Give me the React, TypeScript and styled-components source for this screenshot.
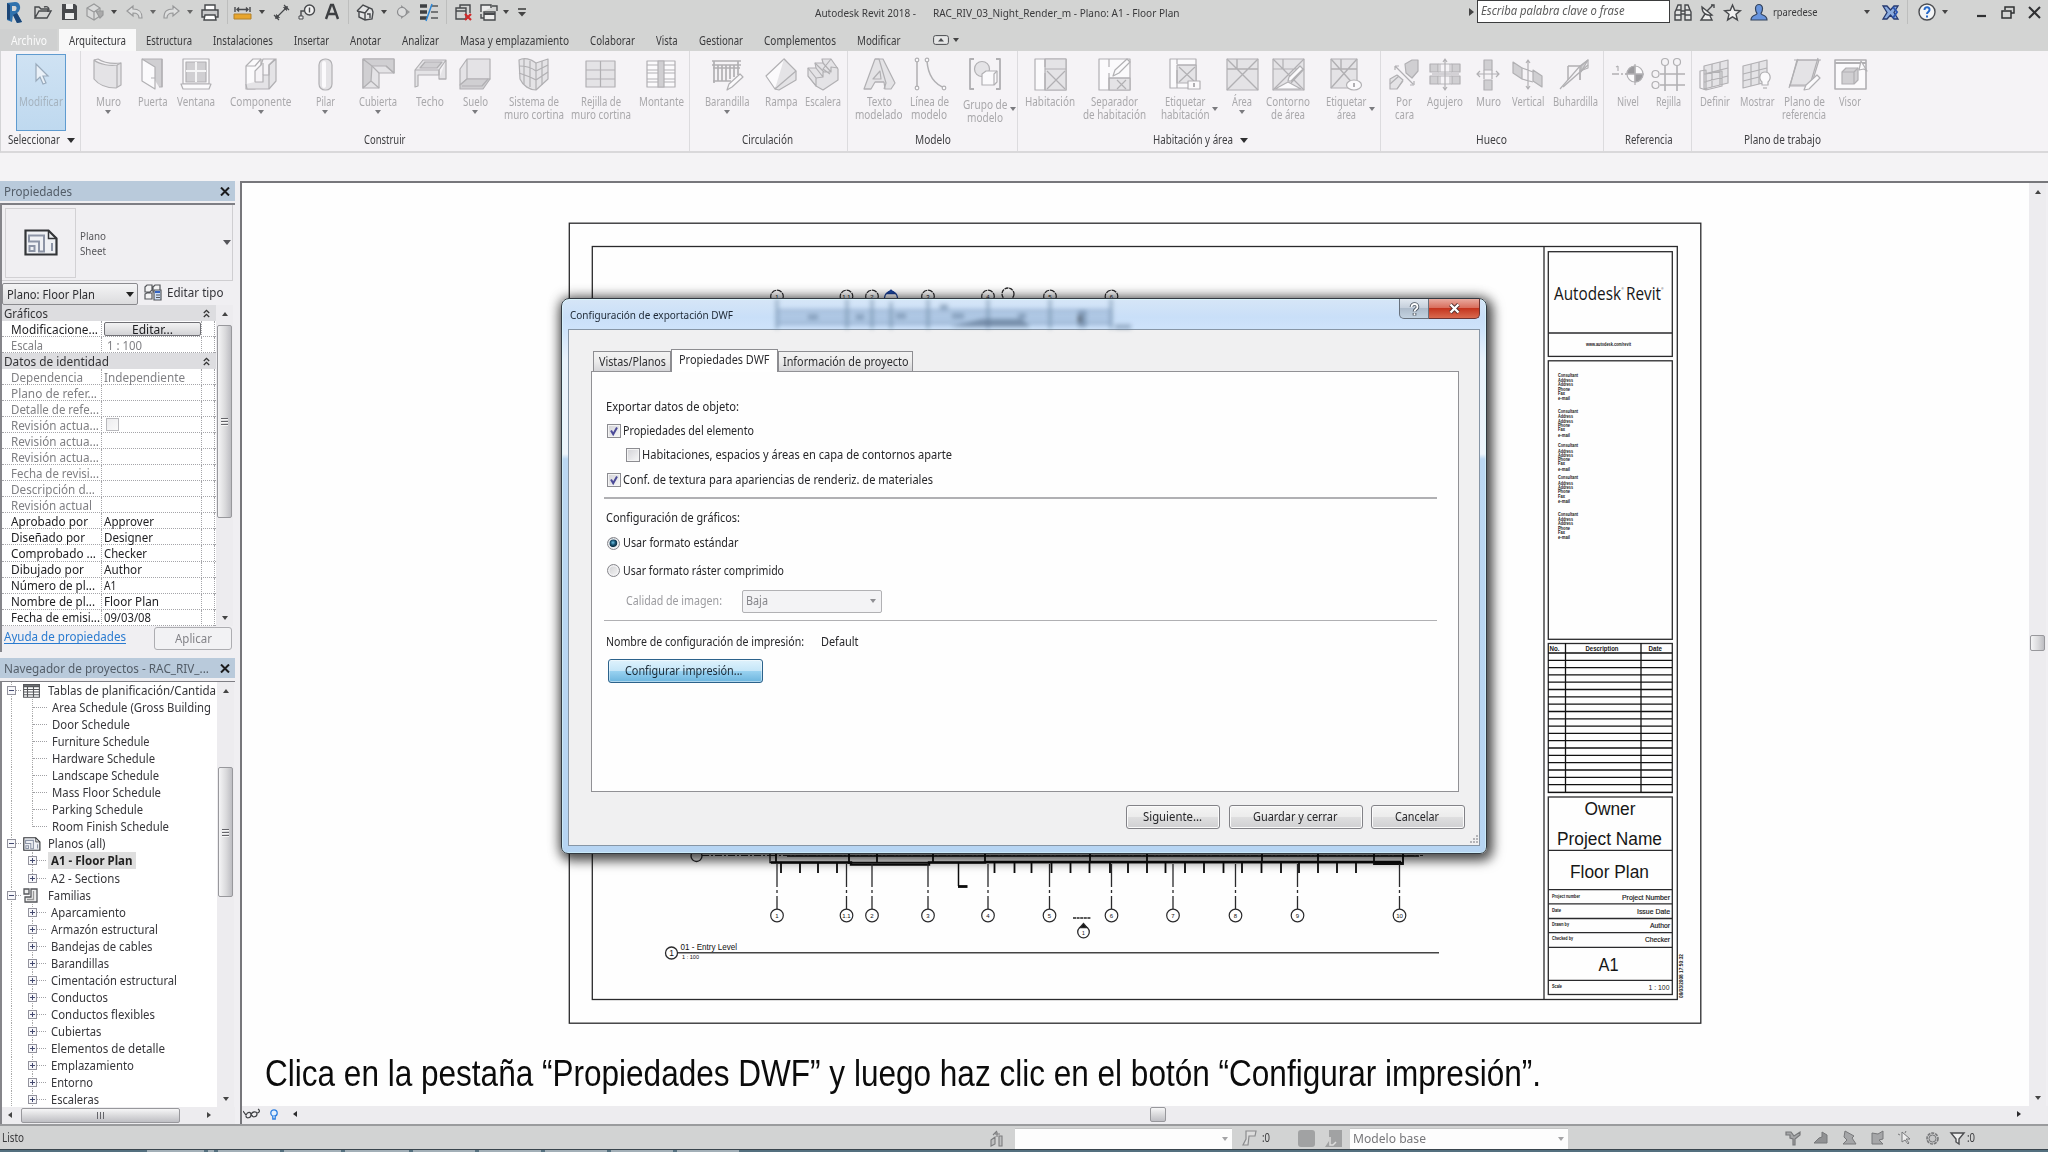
import React, { useLayoutEffect, useRef } from 'react';
import styled, { createGlobalStyle, css } from 'styled-components';

const UI = `"Noto Sans", "Open Sans", "DejaVu Sans", sans-serif`;
const ARIAL = `"Liberation Sans", Arial, sans-serif`;

const Global = createGlobalStyle`
  *, *::before, *::after { box-sizing: border-box; }
  html, body { margin: 0; padding: 0; }
  body { width: 2048px; height: 1152px; overflow: hidden; background: #f4f3f5; font-family: ${UI}; font-size: 12px; color: #2c2c2e; }
`;

/* ---------- condensed text ---------- */
const FitBox = styled.span<{ $w: number }>`
  display: inline-block;
  flex: none;
  width: ${p => p.$w}px;
  white-space: nowrap;
  text-align: left;
`;
const FitInner = styled.span`
  display: inline-block;
  transform-origin: 0 50%;
`;
function Fit({ w, children }: { w: number; children: React.ReactNode }) {
  const ref = useRef<HTMLSpanElement>(null);
  useLayoutEffect(() => {
    const el = ref.current;
    if (!el) return;
    el.style.transform = 'none';
    el.style.transform = `scaleX(${w / el.getBoundingClientRect().width})`;
  }, [w, children]);
  return <FitBox $w={w}><FitInner ref={ref}>{children}</FitInner></FitBox>;
}

const Tri = styled.i<{ $d?: 'up' | 'down' | 'left' | 'right'; $s?: number; $c?: string }>`
  display: block;
  flex: none;
  width: 0;
  height: 0;
  ${p => {
    const s = p.$s ?? 3;
    const c = p.$c ?? '#444';
    const d = p.$d ?? 'down';
    if (d === 'down') return css`border: ${s}px solid transparent; border-bottom: 0; border-top: ${s + 1}px solid ${c};`;
    if (d === 'up') return css`border: ${s}px solid transparent; border-top: 0; border-bottom: ${s + 1}px solid ${c};`;
    if (d === 'left') return css`border: ${s}px solid transparent; border-left: 0; border-right: ${s + 1}px solid ${c};`;
    return css`border: ${s}px solid transparent; border-right: 0; border-left: ${s + 1}px solid ${c};`;
  }}
`;

/* ---------- page frame ---------- */
const Page = styled.div`
  position: relative;
  width: 2048px;
  height: 1152px;
  overflow: hidden;
  display: flex;
  flex-direction: column;
  background: #f4f3f5;
`;
const TitleBar = styled.header`
  height: 29px;
  flex: none;
  display: flex;
  align-items: flex-start;
  background: #d3d4d3;
`;
const Slot = styled.div<{ $gap: number; $w: number; $h?: number }>`
  flex: none;
  margin-left: ${p => p.$gap}px;
  width: ${p => p.$w}px;
  height: ${p => p.$h ?? 24}px;
  display: flex;
  align-items: center;
  justify-content: center;
  svg { display: block; flex: none; overflow: visible; }
`;
const VSep = styled.div<{ $gap: number }>`
  flex: none;
  width: 1px;
  height: 24px;
  margin-left: ${p => p.$gap}px;
  background: #bdbebd;
`;
const AppTitle = styled.div<{ $gap: number; $w: number }>`
  margin-left: ${p => p.$gap}px;
  width: ${p => p.$w}px;
  line-height: 26px;
  font-size: 11.5px;
  color: #3a3a3c;
`;
const SearchInput = styled.div`
  margin-left: 3px;
  width: 193px;
  height: 23px;
  border: 1.5px solid #3b3c3d;
  background: #fff;
  padding-left: 3px;
  line-height: 20px;
  font-style: italic;
  font-size: 12px;
  color: #5c5c5c;
`;
const UserName = styled.div`
  margin-left: 5px;
  width: 45px;
  line-height: 24px;
  font-size: 11.5px;
  color: #3a3a3c;
`;
const Tabs = styled.nav`
  height: 22px;
  flex: none;
  display: flex;
  background: #d3d4d3;
`;
const Tab = styled.div<{ $on?: boolean; $file?: boolean }>`
  height: 22px;
  line-height: 23px;
  padding: 0 ${p => (p.$on ? 10 : 10.5)}px;
  margin-right: ${p => (p.$file ? 1.5 : 0)}px;
  font-size: 12px;
  color: ${p => (p.$file ? '#fbfbfb' : '#3a3a3c')};
  background: ${p => (p.$on ? '#f8f8f8' : p.$file ? '#cfd0d0' : 'transparent')};
`;
const TabExtra = styled.div`
  display: flex;
  align-items: center;
  gap: 4px;
  margin-left: 22px;
`;
const Ribbon = styled.section`
  height: 102px;
  flex: none;
  display: flex;
  background: #f5f3f6;
  border-bottom: 2px solid #d9d8da;
  border-left: 1px solid #d4d4d6;
`;
const RPanel = styled.div<{ $w: number; $last?: boolean }>`
  width: ${p => p.$w}px;
  flex: none;
  display: flex;
  flex-direction: column;
  border-right: ${p => (p.$last ? 0 : 1)}px solid #dcdbde;
`;
const RTools = styled.div`
  height: 79px;
  display: flex;
  align-items: flex-start;
`;
const RTitle = styled.div<{ $pad: number }>`
  padding-left: ${p => p.$pad}px;
  line-height: 20px;
  font-size: 12px;
  display: flex;
  align-items: center;
  gap: 7px;
  color: #3f3f42;
`;
const Tool = styled.div<{ $gap: number; $w: number; $drop?: boolean }>`
  position: relative;
  flex: none;
  margin-left: ${p => p.$gap}px;
  width: ${p => p.$w}px;
  padding-top: 6px;
  display: flex;
  flex-direction: column;
  align-items: center;
  color: #a9a8ab;
  font-size: 12px;
  line-height: 13px;
  svg { display: block; flex: none; margin-bottom: ${p => (p.$drop ? 7 : 4)}px; overflow: visible; }
`;
const UnderArrow = styled.div`
  margin-top: 2px;
`;
const SideArrow = styled.div`
  position: absolute;
  right: -8px;
  top: 56px;
`;
const SelectedTool = styled.div`
  width: 50px;
  height: 77px;
  margin: 3px 0 0 15px;
  border: 1px solid #5f9bd0;
  background: linear-gradient(#cfe2f3, #bfd9ef);
  display: flex;
  flex-direction: column;
  align-items: center;
  padding-top: 7px;
  font-size: 12px;
  line-height: 13px;
  color: #a5b3bf;
  svg { display: block; margin-bottom: 9px; }
`;
const OptionsBar = styled.div`
  height: 28px;
  flex: none;
  background: #f4f3f5;
`;

/* ---------- main area ---------- */
const Main = styled.main`
  height: 943px;
  flex: none;
  display: flex;
  background: #f0eff2;
`;
const Side = styled.aside`
  width: 235px;
  flex: none;
  display: flex;
  flex-direction: column;
`;
const PaneHead = styled.div`
  height: 20px;
  flex: none;
  display: flex;
  align-items: center;
  justify-content: space-between;
  padding: 1px 5px 0 4px;
  background: #b9cadb;
  color: #535d68;
  font-size: 12px;
  line-height: 20px;
`;
const PropsBody = styled.div`
  margin-top: 2px;
  height: 449px;
  flex: none;
  border-left: 2px solid #85858a;
  border-top: 2px solid #7e7e84;
  display: flex;
  flex-direction: column;
`;
const TypeRow = styled.div`
  height: 76px;
  flex: none;
  width: 231px;
  border-right: 1px solid #cfced1;
  border-bottom: 1px solid #cfced1;
  display: flex;
  align-items: center;
  padding: 0 1px 0 3px;
`;
const Thumb = styled.div`
  width: 71px;
  height: 70px;
  border: 1px solid #d2d1d4;
  display: flex;
  align-items: center;
  justify-content: center;
`;
const TypeText = styled.div`
  flex: 1;
  margin-left: 4px;
  font-size: 11px;
  line-height: 15px;
  color: #56565a;
  display: flex;
  flex-direction: column;
`;
const SelectorRow = styled.div`
  height: 24px;
  flex: none;
  display: flex;
  align-items: center;
  padding-top: 2px;
`;
const Combo = styled.div`
  width: 136px;
  height: 22px;
  border: 1px solid #8a8a8e;
  border-radius: 2px;
  background: linear-gradient(#f4f4f5, #dcdcde);
  display: flex;
  align-items: center;
  justify-content: space-between;
  padding: 0 3px 0 4px;
  color: #2d2d30;
`;
const EditType = styled.div`
  margin-left: 6px;
  display: flex;
  gap: 5px;
  align-items: center;
  color: #333338;
  line-height: 15px;
  padding-bottom: 3px;
`;
const GridWrap = styled.div`
  height: 321px;
  flex: none;
  display: flex;
`;
const PropGrid = styled.div`
  width: 214px;
  display: flex;
  flex-direction: column;
  background: #fff;
`;
const PropGroup = styled.div`
  height: 16.04px;
  flex: none;
  display: flex;
  justify-content: space-between;
  align-items: center;
  background: #dddde0;
  padding: 1px 6px 0 2px;
  line-height: 16px;
  color: #333336;
`;
const PropRow = styled.div<{ $dim?: boolean }>`
  height: 16.04px;
  flex: none;
  display: grid;
  grid-template-columns: 100px 100px 13px;
  line-height: 16px;
  color: ${p => (p.$dim ? '#808084' : '#1d1d20')};
  border-bottom: 1px dotted #a5a5a9;
  & > div { border-right: 1px dotted #a5a5a9; height: 16px; padding-top: 0.6px; }
  & > div:first-child { padding-left: 9px; }
  & > div:nth-child(2) { padding-left: 2px; }
`;
const EditButton = styled.div`
  margin: 0.4px 0 0;
  width: 97px;
  height: 14px;
  border: 1px solid #707075;
  border-radius: 2px;
  background: linear-gradient(#f3f3f3, #d3d3d6);
  text-align: center;
  line-height: 13px;
`;
const MiniCheck = styled.div`
  width: 13px;
  height: 13px;
  margin: 0.4px 0 0 2px;
  border: 1px solid #b9b9bd;
  background: linear-gradient(135deg, #ececee, #fafafa);
`;
const VScroll = styled.div`
  width: 17px;
  flex: none;
  background: #edecef;
  display: flex;
  flex-direction: column;
  align-items: center;
  padding: 7px 0 6px;
`;
const VThumb = styled.div<{ $mt: number; $h: number }>`
  width: 15px;
  height: ${p => p.$h}px;
  margin-top: ${p => p.$mt}px;
  border: 1px solid #98989c;
  border-radius: 2px;
  background: linear-gradient(90deg, #f5f5f6, #dadadc 55%, #bdbdc2);
  display: flex;
  flex-direction: column;
  align-items: center;
  justify-content: center;
  gap: 2px;
  & > i { width: 7px; height: 1px; background: #65656a; box-shadow: 0 1px 0 #f6f6f6; }
`;
const Spacer = styled.div`
  flex: 1;
`;
const PropsFoot = styled.div`
  height: 26px;
  flex: none;
  display: flex;
  align-items: center;
  justify-content: space-between;
  padding: 0 3px 2px 2px;
`;
const HelpLink = styled.div`
  color: #2a7bd0;
  line-height: 16px;
  margin-top: -3px;
  border-bottom: 1px solid #2a7bd0;
  height: 15px;
`;
const ApplyButton = styled.div`
  width: 78px;
  height: 23px;
  border: 1px solid #adadb1;
  border-radius: 3px;
  display: flex;
  align-items: center;
  justify-content: center;
  background: #f2f2f4;
  color: #838388;
`;
const BrowserHead = styled(PaneHead)`
  margin-top: 6px;
`;
const TreeWrap = styled.div`
  margin-top: 3px;
  height: 426px;
  flex: none;
  display: flex;
  border-left: 2px solid #85858a;
  border-top: 1px solid #7e7e84;
`;
const Tree = styled.div`
  width: 215px;
  background: #fff;
  overflow: hidden;
`;
const TreeRow = styled.div<{ $child?: boolean }>`
  position: relative;
  height: 17.06px;
  display: flex;
  align-items: center;
  padding-left: ${p => (p.$child ? 26 : 5)}px;
  line-height: 17px;
  color: #36363a;
  white-space: nowrap;
  svg { flex: none; }
  &::before {
    content: '';
    position: absolute;
    left: 9px;
    top: 0;
    bottom: 0;
    border-left: 1px dotted #aaa;
  }
`;
const Expander = styled.span`
  position: relative;
  flex: none;
  width: 9px;
  height: 9px;
  border: 1px solid #92929c;
  background: #f7f7fa;
  svg { position: absolute; left: 0; top: 0; display: block; }
`;
const Branch = styled.span<{ $w: number; $ml?: number }>`
  flex: none;
  width: ${p => p.$w}px;
  margin-left: ${p => p.$ml ?? 0}px;
  margin-right: 2px;
  border-top: 1px dotted #a0a0a4;
`;
const NodeIcon = styled.span`
  flex: none;
  width: 22px;
  display: flex;
  align-items: center;
`;
const ChildLine = styled.span<{ $half?: boolean }>`
  position: absolute;
  left: 30px;
  top: 0;
  height: ${p => (p.$half ? '50%' : '100%')};
  border-left: 1px dotted #aaa;
`;
const NodeText = styled.span<{ $active?: boolean }>`
  display: flex;
  padding: 0 4px 0 2.5px;
  font-weight: ${p => (p.$active ? 700 : 400)};
  color: ${p => (p.$active ? '#222' : 'inherit')};
  background: ${p => (p.$active ? '#dedede' : 'transparent')};
`;
const HScroll = styled.div`
  height: 17px;
  width: 235px;
  flex: none;
  border-left: 2px solid #85858a;
  background: #edecef;
  display: flex;
  align-items: center;
  padding-left: 6px;
  padding-bottom: 1px;
`;
const HThumb = styled.div<{ $w: number; $ml: number }>`
  width: ${p => p.$w}px;
  margin-left: ${p => p.$ml}px;
  height: 15px;
  border: 1px solid #98989c;
  border-radius: 2px;
  background: linear-gradient(#f6f6f7, #dadadc 50%, #bfbfc4);
  display: flex;
  justify-content: center;
  align-items: center;
  gap: 2px;
  & > i { width: 1px; height: 7px; background: #65656a; }
`;
const View = styled.section`
  margin-left: 5px;
  flex: 1;
  display: flex;
  flex-direction: column;
  border-left: 2px solid #77777b;
  border-top: 2px solid #77777b;
`;
const ViewTop = styled.div`
  height: 923px;
  flex: none;
  display: flex;
`;
const SheetArea = styled.div`
  position: relative;
  width: 1787px;
  background: #fefefe;
`;
const Drawing = styled.svg`
  display: block;
  font-family: ${ARIAL};
`;
const Caption = styled.p`
  position: absolute;
  left: 23px;
  top: 867px;
  margin: 0;
  font-family: ${ARIAL};
  font-size: 37.5px;
  line-height: 46px;
  color: #0b0b0b;
  white-space: nowrap;
`;
const ViewBar = styled.div`
  flex: 1;
  display: flex;
  align-items: center;
  padding: 0 0 2px 1px;
  background: #edecef;
  svg { display: block; flex: none; }
`;

/* ---------- status bar ---------- */
const Status = styled.footer`
  height: 25px;
  flex: none;
  border-top: 2px solid #9a9b9d;
  padding-top: 1px;
  background: #d2d3d3;
  display: flex;
  align-items: center;
  font-size: 12px;
  line-height: 22px;
  color: #3a3a3c;
`;
const StatusBox = styled.div<{ $gap: number; $w: number }>`
  flex: none;
  margin-left: ${p => p.$gap}px;
  width: ${p => p.$w}px;
  height: 21px;
  background: #fdfdfd;
  display: flex;
  align-items: center;
  justify-content: space-between;
  padding: 0 4px 0 3px;
  line-height: 20px;
  color: #77777a;
  border-top: 1px solid #c3c4c4;
`;
const Taskbar = styled.div`
  flex: 1;
  display: flex;
  gap: 4px;
  padding: 0 600px 0 147px;
  background: #54707f;
  border-top: 1px solid #39454d;
`;
const TaskChip = styled.i<{ $w: number }>`
  width: ${p => p.$w}px;
  background: #a3b0b8;
`;

/* ---------- dialog ---------- */
const Dialog = styled.section`
  position: absolute;
  left: 561px;
  top: 298px;
  width: 926px;
  height: 556px;
  border: 1.5px solid #333a42;
  border-radius: 8px 8px 7px 7px;
  background: linear-gradient(180deg, #d6e6f7 0, #c9dff8 18px, #cfe4fb 32px, #e9f2fb 60px, #eef5fc 155px, #bcd8f3 160px, #b7d5f3 100%);
  box-shadow: 0 0 0 0.5px #dff inset, 3px 4px 12px 3px rgba(0, 0, 0, 0.6), 0 0 14px rgba(0, 0, 0, 0.45);
  padding: 0 6px 7px;
  display: flex;
  flex-direction: column;
`;
const DlgTitle = styled.div`
  position: relative;
  height: 30px;
  flex: none;
  display: flex;
  justify-content: space-between;
  padding-left: 2px;
  line-height: 31px;
  font-size: 11.5px;
  color: #1d2733;
`;
const Ghost = styled.svg`
  position: absolute;
  left: 130px;
  top: 0;
  filter: blur(2px);
`;
const CapButtons = styled.div`
  display: flex;
  height: 20px;
  position: relative;
`;
const HelpBtn = styled.div`
  width: 30px;
  border: 1px solid #68727e;
  border-top: 0;
  border-radius: 0 0 0 5px;
  background: linear-gradient(#e1e8ef, #c6d0dc 45%, #aebccb 50%, #c3d2e0);
  display: flex;
  align-items: center;
  justify-content: center;
`;
const CloseBtn = styled(HelpBtn)`
  width: 51px;
  border-left: 0;
  border-color: #6d3433;
  border-radius: 0 0 5px 0;
  background: linear-gradient(#e9aa9f, #d9705f 45%, #c4351f 50%, #d96a4f);
`;
const Client = styled.div`
  flex: 1;
  border: 1px solid #8796a6;
  background: #f0f0f1;
  padding: 19px 20px 0 22px;
  display: flex;
  flex-direction: column;
`;
const DlgTabs = styled.div`
  height: 22px;
  display: flex;
  align-items: flex-end;
  padding-left: 2px;
`;
const DlgTab = styled.div<{ $w: number; $on?: boolean }>`
  position: relative;
  z-index: ${p => (p.$on ? 1 : 0)};
  width: ${p => p.$w}px;
  height: ${p => (p.$on ? 23 : 20)}px;
  margin-bottom: ${p => (p.$on ? -1 : 0)}px;
  padding: ${p => (p.$on ? '0 0 2px' : '1px 0 0')};
  border: 1px solid #8d8d91;
  border-bottom: 0;
  background: ${p => (p.$on ? '#fff' : 'linear-gradient(#f3f3f3, #ececec 50%, #d5d5d8)')};
  display: flex;
  justify-content: center;
  align-items: center;
  line-height: 18px;
  font-size: 12.5px;
  color: #2d2d30;
`;
const TabPage = styled.div`
  height: 421px;
  border: 1px solid #919195;
  background: #fefefe;
  padding: 24px 21px 0 12px;
  font-size: 12.5px;
  color: #262629;
`;
const Line = styled.div<{ $h: number; $ml?: number; $dim?: boolean; $pt?: number }>`
  height: ${p => p.$h}px;
  padding-left: ${p => p.$ml ?? 2}px;
  padding-top: ${p => p.$pt ?? 0}px;
  display: flex;
  align-items: center;
  line-height: 18px;
  color: ${p => (p.$dim ? '#9b9b9f' : 'inherit')};
`;
const Rule = styled.div<{ $mt: number }>`
  margin-top: ${p => p.$mt}px;
  height: 1.5px;
  background: #b0b0b3;
`;
const CheckBox = styled.span`
  flex: none;
  width: 14px;
  height: 14px;
  margin: 0 2px 0 1px;
  border: 1px solid #8c8c91;
  background: linear-gradient(135deg, #d2d2d6, #f8f8f8);
  box-shadow: inset 0 0 0 1px #f4f4f4;
  svg { display: block; }
`;
const Radio = styled.span<{ $on?: boolean }>`
  flex: none;
  width: 13px;
  height: 13px;
  margin: 0 3px 0 1px;
  border: 1px solid #86868b;
  border-radius: 50%;
  box-shadow: inset 0 0 0 1.5px #f2f2f4;
  background: ${p => (p.$on ? 'radial-gradient(circle at 45% 42%, #6cc2e6 0, #17506f 28%, #0f3449 45%, #dfe3e8 56%)' : 'linear-gradient(135deg, #cfcfd2, #f6f6f6)')};
`;
const QualityCombo = styled.div`
  margin-left: 20px;
  width: 140px;
  height: 23px;
  border: 1px solid #b1b1b4;
  border-radius: 2px;
  background: #f3f3f5;
  display: flex;
  align-items: center;
  justify-content: space-between;
  padding: 0 5px 0 3px;
  color: #85858a;
`;
const PrintButton = styled.div`
  margin-left: 4px;
  width: 155px;
  height: 24px;
  border: 1.5px solid #2c628b;
  border-radius: 3px;
  background: linear-gradient(#dff2fc, #c5e6f8 48%, #98d1f0 52%, #6cb5de);
  box-shadow: inset 0 0 0 1px rgba(255, 255, 255, 0.45);
  display: flex;
  justify-content: center;
  align-items: center;
  padding-right: 3px;
  color: #1b2a36;
  line-height: 18px;
`;
const DlgFoot = styled.div`
  position: relative;
  flex: 1;
  display: flex;
  justify-content: flex-end;
  padding: 13px 0 0;
  margin-right: -6px;
  font-size: 12.5px;
`;
const DlgButton = styled.div<{ $w: number; $gap?: number }>`
  width: ${p => p.$w}px;
  height: 24px;
  margin-left: ${p => p.$gap ?? 0}px;
  border: 1px solid #828287;
  border-radius: 3px;
  background: linear-gradient(#f4f4f4, #ececec 48%, #dededf 52%, #d0d0d2);
  box-shadow: inset 0 0 0 1px #fbfbfb;
  display: flex;
  justify-content: center;
  align-items: center;
  padding-right: 2px;
  line-height: 18px;
  color: #262629;
`;
const Grip = styled.svg`
  position: absolute;
  right: -13px;
  bottom: 1px;
`;

/* ---------- ribbon icons ---------- */
const F = '#e4e3e6';
const D = '#d0cfd2';
const W = '#fbfafc';
const glyphs: Record<string, React.ReactNode> = {
  muro: <><path d="M3 3c6 5 17 6 23 5l4-2v22l-5 3C15 31 7 27 3 22z" fill={F} /><path d="M3 3l4-1c6 4 13 5 23 4M26 8v22" /></>,
  puerta: <><path d="M6 2h20v28h-3" fill={D} /><path d="M6 2l13 8v22L6 24z" fill={W} /><path d="M26 2v28M15 21h4" /></>,
  ventana: <><path d="M4 2h26v25H4z" fill={W} /><path d="M7 5h20v20H7z" fill={D} /><path d="M17 5v20M7 14h20" stroke="#f5f5f6" strokeWidth="2" /><path d="M2 27h30l-2 5H4z" fill={W} /></>,
  componente: <><path d="M2 9l7-7h8v6l-6 6v18H2z" fill={W} /><path d="M11 25h8v-7h6V8l7-6v22l-7 8H3l-1-5" fill={F} /><path d="M2 9h9l6-7M17 8l2-6h12l-6 6v24M19 18V6" /></>,
  pilar: <><rect x="11" y="2" width="13" height="31" rx="6" fill={F} /><rect x="14" y="4" width="4" height="27" rx="2" fill={W} stroke="none" /></>,
  cubierta: <><path d="M2 2h31v14H18v15H2z" fill={F} /><path d="M2 2l9 7-1 15-8 7zM2 2h31v14l-8-7H11z" fill={D} /><path d="M18 16l-7-7M18 31l-8-7M33 16l-8-7" /></>,
  techo: <><path d="M10 3h23l-7 10H2zM2 13v17l3-1V18h21V13M33 3v19h-7" fill={F} /><path d="M12 5h17l-5 6H7z" fill={D} /><path d="M26 13v9h7" /></>,
  suelo: <><path d="M9 2h23v20H9zM9 2L2 12v16l7-6z" fill={F} /><path d="M9 22h23l-7 10H2v-4z" fill={D} /><path d="M4 29h20l6-7" /></>,
  sistema: <><path d="M2 3c5-3 12-1 17 3l12-4v20l-12 11C13 33 6 29 3 22z" fill={F} /><path d="M7 2v25M13 4v26M19 6v27M25 4v24M2 9c6 0 12 1 17 5l12-6M2 16c6 2 12 4 17 7l12-8" /></>,
  rejilla: <><rect x="2" y="4" width="29" height="26" fill={F} /><path d="M16.500 4v26M2 13h29M2 22h29" /></>,
  montante: <><rect x="3" y="4" width="28" height="26" fill={W} /><path d="M3 8h28M3 13h28M3 16h28M3 22h28M3 25h28" /><path d="M14 4h6v26h-6z" fill={D} /></>,
  barandilla: <><path d="M2 4h29M2 8h29M3 11h27M3 24h18M4 4v22M8 8v16M12 8v16M16 8v16M20 8v14M24 8v12M28 4v14" strokeWidth="1.700" /><path d="M17 33l2-6 11-10 3 3-11 10z" fill={W} /></>,
  rampa: <><path d="M2 19L20 2l6 7L11 32z" fill={W} /><path d="M20 2l12 12v9L15 33l-4-1" fill={F} /><path d="M11 32L32 14" /></>,
  escalera: <><path d="M2 11h8l-1-5h8l-1-4h9l7 10v11L17 33l-7-4-8-10z" fill={F} /><path d="M2 11l8 10M10 11l7 9M9 6l9 9M17 6l8 9M25 2l-8 10 7 5M2 19l8 10V21l7-1v-5h8v-5l7 1" /></>,
  texto: <><path d="M13 2h8l12 24-4 6h-6l-1-7h-9l-4 7H2z" fill={F} /><path d="M13 2h4l7 24-2 6M11 22h8l-1-8zM2 32h7M13 25h9" /></>,
  linea: <><path d="M5 4v26M15 4c1 14 7 23 18 27" strokeWidth="1.500" /><circle cx="5" cy="3" r="1.800" fill={W} /><circle cx="5" cy="31" r="1.800" fill={W} /><circle cx="15" cy="3" r="1.800" fill={W} /><circle cx="32" cy="31" r="1.800" fill={W} /></>,
  grupo: <><path d="M6 2H2v30h4M28 2h4v30h-4" strokeWidth="1.800" /><circle cx="14" cy="12" r="7.500" fill={F} /><path d="M14 17l4-3h11v11l-3 3H14z" fill={W} /><path d="M29 14l-3 3v11" /></>,
  habitacion: <><rect x="2" y="2" width="31" height="31" fill={W} /><path d="M12 2h21v31H12z" fill={F} /><path d="M12 2v8M12 16v17M12 12h21M14 14l18 18M32 14L14 32" /></>,
  separador: <><rect x="2" y="2" width="31" height="31" fill={W} /><path d="M12 21h21v12H12z" fill={F} /><path d="M12 2v8M12 16v17M12 21h21M20 23l9 9M29 23l-9 9" /><path d="M16 19l2-6L30 2l3 3-11 11z" fill={W} /></>,
  etiqHab: <><rect x="2" y="2" width="26" height="29" fill={W} /><path d="M9 8h19v18H9z" fill={F} /><path d="M9 2v5M9 13v18M9 8h19M11 10l16 15M27 10L11 25" /><rect x="20" y="24" width="12" height="8" fill={W} /><path d="M26 26v4" strokeWidth="2" /></>,
  area: <><rect x="2" y="2" width="31" height="31" fill={F} /><path d="M2 12h31M12 2v10M2 2l31 31M33 2L2 33" strokeWidth="1.400" /></>,
  contorno: <><rect x="2" y="2" width="31" height="31" fill={F} /><path d="M2 12h31M12 2v10M2 2l31 31M33 2L2 33" /><path d="M4 32l13-7 13 7z" fill={W} /><path d="M17 24l1-4 11-11 3 3-12 12zM20 26l13-14" fill={W} /></>,
  etiqArea: <><rect x="2" y="2" width="26" height="29" fill={F} /><path d="M2 12h26M12 2v10M2 2l24 27M28 2L2 31" strokeWidth="1.400" /><ellipse cx="25" cy="28" rx="7.500" ry="5" fill={W} /><path d="M25 26v4" strokeWidth="2" /></>,
  porCara: <><path d="M18 7l7-4h6v11l-6 7-6-5z" fill={D} /><path d="M3 22l7-4 6 5-6 9H3z" fill={F} /><path d="M8 9l18 18M8 9v4M8 9h4M27 28v-4M27 28h-4M3 27l9-8M10 32l6-8" /></>,
  agujero: <><path d="M2 7h8v8H2zM24 7h8v8h-8zM2 19h8v8H2zM24 19h8v8h-8z" fill={D} /><path d="M10 7h14M10 15h14M10 19h14M10 27h14M12 7v8M22 7v8M12 19v8M22 19v8" strokeWidth=".9" /><path d="M17 2v31M4 17h27M15 5l2-3 2 3M15 30l2 3 2-3" /></>,
  huecoMuro: <><path d="M13 3h8v10h-8zM13 23h8v10h-8z" fill={D} /><path d="M6 17h22M9 14l-3 3 3 3M25 14l3 3-3 3M13 13v9M21 13v9" /></>,
  vertical: <><path d="M2 5l9 6v11l-9-6zM22 13l9 6v11l-9-6z" fill={D} /><path d="M17 3v29M15 6l2-3 2 3M15 29l2 3 2-3M11 11l11 4M11 22l11 3" /></>,
  buhardilla: <><path d="M2 32L22 9l8-6v8l-8 3v9" /><path d="M30 3l-7 6v6z" fill={D} /><path d="M10 9h13M10 9v14M5 30L30 8M22 9v14" strokeWidth="1.500" /></>,
  nivel: <><path d="M1 17h26" strokeDasharray="7 2 2 2" strokeWidth="1.600" /><circle cx="24" cy="17" r="8" fill={W} /><path d="M24 17V9a8 8 0 0 0-8 8zM24 17v8a8 8 0 0 0 8-8z" fill="#9b9a9e" /><path d="M24 7v21M14 17h19M7 9v5M5 10l2-1" /></>,
  rejillaRef: <><path d="M14 9v25M26 9v25M9 17h25M9 28h25" strokeWidth="1.600" /><circle cx="14" cy="5" r="3.500" /><circle cx="26" cy="5" r="3.500" /><circle cx="4.500" cy="17" r="3.500" /><circle cx="4.500" cy="28" r="3.500" /></>,
  definir: <><path d="M6 9l24-6v23L6 32z" fill={F} /><path d="M6 17l24-6M6 25l24-6M14 7v23M22 5v23M2 14l6-1v20l-6-2zM8 33l16-4V14L8 17" /></>,
  mostrar: <><path d="M3 9l24-6v22L3 31z" fill={F} /><path d="M3 17l24-6M3 24l24-6M11 7v22M19 5v22" /><path d="M22 25c-4-4-2-10 3-10s7 6 3 10v3h-6z" fill={W} /><path d="M23 31h4" /></>,
  planoRef: <><path d="M10 3h22l-8 26H3z" fill={F} /><path d="M7 3h27M11 2L2 31M31 1l-9 30M2 28h22" /><path d="M17 33l2-5 11-10 3 3-11 11z" fill={W} /></>,
  visor: <><path d="M2 3h31v29H2z" fill={W} strokeWidth="1.600" /><path d="M2 6h31" strokeWidth="2" /><path d="M9 15l4-4h12v12l-4 4H9z" fill={D} /><path d="M9 15h12v12M21 15l4-4" /><path d="M28 4l-2 9 5-1 3 2z" fill={W} /></>,
};
const Glyph = ({ n }: { n: string }) => (
  <svg width="34" height="34" viewBox="0 0 34 34" fill="none" stroke="#b1b0b3" strokeWidth="1.200" strokeLinejoin="round">{glyphs[n]}</svg>
);

type ToolDef = { g: string; gap: number; w: number; t: [string, number][]; under?: boolean; side?: boolean; drop?: boolean };
type PanelDef = { title: string; tw: number; pad: number; w: number; tools: ToolDef[]; arrow?: boolean };
const panels: PanelDef[] = [
  { title: 'Construir', tw: 41.5, pad: 283, w: 609, tools: [
    { g: 'muro', gap: 12, w: 30, t: [['Muro', 25]], under: true },
    { g: 'puerta', gap: 14, w: 32, t: [['Puerta', 29.5]] },
    { g: 'ventana', gap: 7, w: 40, t: [['Ventana', 38]] },
    { g: 'componente', gap: 13, w: 64, t: [['Componente', 61.5]], under: true },
    { g: 'pilar', gap: 16, w: 32, t: [['Pilar', 19]], under: true },
    { g: 'cubierta', gap: 17, w: 40, t: [['Cubierta', 38]], under: true },
    { g: 'techo', gap: 15, w: 34, t: [['Techo', 28]] },
    { g: 'suelo', gap: 11, w: 34, t: [['Suelo', 25]], under: true },
    { g: 'sistema', gap: 11, w: 62, t: [['Sistema de', 50], ['muro cortina', 60]] },
    { g: 'rejilla', gap: 5, w: 62, t: [['Rejilla de', 40], ['muro cortina', 60]] },
    { g: 'montante', gap: 6, w: 46, t: [['Montante', 45]] },
  ] },
  { title: 'Circulación', tw: 51, pad: 52, w: 158, tools: [
    { g: 'barandilla', gap: 14, w: 46, t: [['Barandilla', 44.5]], under: true },
    { g: 'rampa', gap: 14, w: 34, t: [['Rampa', 32.5]] },
    { g: 'escalera', gap: 7, w: 36, t: [['Escalera', 36]] },
  ] },
  { title: 'Modelo', tw: 36, pad: 67, w: 170, tools: [
    { g: 'texto', gap: 7, w: 48, t: [['Texto', 25], ['modelado', 47.5]] },
    { g: 'linea', gap: 6, w: 40, t: [['Línea de', 39], ['modelo', 36]] },
    { g: 'grupo', gap: 13, w: 46, t: [['Grupo de', 44.5], ['modelo', 36]], side: true, drop: true },
  ] },
  { title: 'Habitación y área', tw: 80, pad: 135, w: 363, arrow: true, tools: [
    { g: 'habitacion', gap: 6, w: 52, t: [['Habitación', 50]] },
    { g: 'separador', gap: 6, w: 64, t: [['Separador', 47], ['de habitación', 63]] },
    { g: 'etiqHab', gap: 14, w: 50, t: [['Etiquetar', 40.5], ['habitación', 48.5]], side: true },
    { g: 'area', gap: 15, w: 34, t: [['Área', 20]], under: true },
    { g: 'contorno', gap: 7, w: 44, t: [['Contorno', 44], ['de área', 34]] },
    { g: 'etiqArea', gap: 15, w: 42, t: [['Etiquetar', 40.5], ['área', 19]], side: true },
  ] },
  { title: 'Hueco', tw: 31, pad: 95, w: 223, tools: [
    { g: 'porCara', gap: 6, w: 34, t: [['Por', 16], ['cara', 19]] },
    { g: 'agujero', gap: 5, w: 38, t: [['Agujero', 36]] },
    { g: 'huecoMuro', gap: 8, w: 32, t: [['Muro', 25]] },
    { g: 'vertical', gap: 7, w: 34, t: [['Vertical', 32.5]] },
    { g: 'buhardilla', gap: 7, w: 46, t: [['Buhardilla', 45]] },
  ] },
  { title: 'Referencia', tw: 47.5, pad: 20.5, w: 88, tools: [
    { g: 'nivel', gap: 7, w: 34, t: [['Nivel', 22]] },
    { g: 'rejillaRef', gap: 6, w: 34, t: [['Rejilla', 25]] },
  ] },
  { title: 'Plano de trabajo', tw: 77, pad: 52, w: 355, tools: [
    { g: 'definir', gap: 7, w: 32, t: [['Definir', 30]] },
    { g: 'mostrar', gap: 8, w: 36, t: [['Mostrar', 34.5]] },
    { g: 'planoRef', gap: 6, w: 46, t: [['Plano de', 41], ['referencia', 44]] },
    { g: 'visor', gap: 6, w: 34, t: [['Visor', 22]] },
  ] },
];

const tabs: [string, number][] = [
  ['Estructura', 46], ['Instalaciones', 60], ['Insertar', 35], ['Anotar', 31], ['Analizar', 37],
  ['Masa y emplazamiento', 109], ['Colaborar', 45], ['Vista', 21.5], ['Gestionar', 44],
  ['Complementos', 72], ['Modificar', 43.5],
];

/* ---------- properties ---------- */
type Prop = { k: string; kw: number; v?: string; vw?: number; dim?: boolean; edit?: boolean; check?: boolean };
const graphicProps: Prop[] = [
  { k: 'Modificacione...', kw: 87, edit: true },
  { k: 'Escala', kw: 32, v: '\u00a01 : 100', vw: 38, dim: true },
];
const idProps: Prop[] = [
  { k: 'Dependencia', kw: 72, v: 'Independiente', vw: 81, dim: true },
  { k: 'Plano de refer...', kw: 86, dim: true },
  { k: 'Detalle de refe...', kw: 88, dim: true },
  { k: 'Revisión actua...', kw: 88, dim: true, check: true },
  { k: 'Revisión actua...', kw: 88, dim: true },
  { k: 'Revisión actua...', kw: 88, dim: true },
  { k: 'Fecha de revisi...', kw: 88, dim: true },
  { k: 'Descripción d...', kw: 84, dim: true },
  { k: 'Revisión actual', kw: 81, dim: true },
  { k: 'Aprobado por', kw: 77, v: 'Approver', vw: 50 },
  { k: 'Diseñado por', kw: 74, v: 'Designer', vw: 49 },
  { k: 'Comprobado ...', kw: 85, v: 'Checker', vw: 43 },
  { k: 'Dibujado por', kw: 73, v: 'Author', vw: 38 },
  { k: 'Número de pl...', kw: 84, v: 'A1', vw: 12.5 },
  { k: 'Nombre de pl...', kw: 84, v: 'Floor Plan', vw: 55 },
  { k: 'Fecha de emisi...', kw: 89, v: '09/03/08', vw: 47 },
];
const Chevrons = () => (
  <svg width="7" height="9" viewBox="0 0 7 9" fill="none" stroke="#333" strokeWidth="1.300"><path d="M.8 4l2.700-2.700L6.200 4M.8 8l2.700-2.700L6.200 8" /></svg>
);
const PropLine = ({ p }: { p: Prop }) => (
  <PropRow $dim={p.dim}>
    <div><Fit w={p.kw}>{p.k}</Fit></div>
    <div>
      {p.edit && <EditButton><Fit w={41}>Editar...</Fit></EditButton>}
      {p.check && <MiniCheck />}
      {p.v && <Fit w={p.vw ?? 40}>{p.v}</Fit>}
    </div>
    <div />
  </PropRow>
);

/* ---------- project browser ---------- */
const schedules: [string, number][] = [
  ['Area Schedule (Gross Building', 159], ['Door Schedule', 78], ['Furniture Schedule', 97.5], ['Hardware Schedule', 103],
  ['Landscape Schedule', 107], ['Mass Floor Schedule', 109], ['Parking Schedule', 91], ['Room Finish Schedule', 117],
];
const families: [string, number][] = [
  ['Aparcamiento', 75], ['Armazón estructural', 107], ['Bandejas de cables', 101.5], ['Barandillas', 58],
  ['Cimentación estructural', 126], ['Conductos', 57], ['Conductos flexibles', 104], ['Cubiertas', 50.5],
  ['Elementos de detalle', 114], ['Emplazamiento', 83], ['Entorno', 42], ['Escaleras', 48],
];
const Box = ({ open }: { open?: boolean }) => (
  <Expander><svg width="7" height="7" viewBox="0 0 7 7" stroke="#444a70" strokeWidth="1"><path d={open ? 'M1 3.500h5' : 'M1 3.500h5M3.500 1v5'} /></svg></Expander>
);
const SheetIcon = ({ s = 1 }: { s?: number }) => (
  <svg width={34 * s} height={27 * s} viewBox="0 0 34 27" fill="none">
    <path d="M1.500 1.500h23l8 8v16h-31z" fill="#eef0f4" stroke="#333538" strokeWidth="2.200" />
    <path d="M24.500 1.500v8h8" stroke="#333538" strokeWidth="1.500" />
    <path d="M5 6.500h15v16h-5v-10H5zM5.500 17h5v5h-5zM28 14v8" stroke="#8c94a6" strokeWidth="2" />
  </svg>
);
const TableIcon = () => (
  <svg width="17" height="14" viewBox="0 0 17 14" fill="#fff" stroke="#55575b" strokeWidth="1.100"><path d="M.6.6h15.800v12.600H.6z" /><path d="M.6 2.500h15.800M.6 5.500h15.800M.6 8h15.800M.6 10.700h15.800M4.500 3v10M10.500 3v10" fill="none" /><path d="M.6.6h15.800v2H.6z" fill="#77797d" /></svg>
);
const FamilyIcon = () => (
  <svg width="16" height="15" viewBox="0 0 16 15" fill="#eee" stroke="#55575b" strokeWidth="1.300"><path d="M1 1h5v5H1zM8 1h6v13H2V9h6z" /><path d="M10.500 3v8.500H4" fill="none" stroke="#999" /></svg>
);

/* ---------- drawing sheet, in window coordinates ---------- */
const gridX: [number, string][] = [
  [777, '1'], [846.5, '1.1'], [872, '2'], [928, '3'], [988, '4'], [1049.5, '5'], [1111.5, '6'], [1173, '7'], [1235.5, '8'], [1297.5, '9'], [1399.5, '10'],
];
const topBubbles: [number, string][] = [[777, '1'], [846.5, '1.1'], [872, '2'], [928, '3'], [988, '4'], [1050, '5'], [1111.5, '6']];
const ticks = [781, 800, 818, 837, 994.5, 1014.5, 1031.5, 1051.5, 1070.5, 1089.5, 1110, 1128, 1147, 1165.5, 1185, 1204, 1223.5, 1242, 1261.5, 1281, 1299, 1318, 1337, 1356];
const consultantY = [374.5, 411, 445.2, 477.3, 513.5];
const issueRows = Array.from({ length: 19 }, (_, i) => 653 + i * 7.31);
const labelRows: [number, string, number, string, number][] = [
  [897, 'Project number', 28, 'Project Number', 48], [911, 'Date', 9, 'Issue Date', 33], [925, 'Drawn by', 17, 'Author', 20], [939.5, 'Checked by', 21, 'Checker', 25],
];
const Sheet = () => (
  <Drawing width="1787" height="923" viewBox="242 183 1787 923" fill="none" stroke="#2a2a2c" strokeWidth="1.300">
    <rect x="569.300" y="223.200" width="1131.500" height="800" />
    <rect x="592.300" y="246.500" width="1085" height="753" />
    <path d="M1544 246.500v753" />
    <rect x="1548.300" y="251.700" width="124" height="104.700" />
    <path d="M1548 333h124" />
    <rect x="1548.300" y="360.800" width="124" height="278.500" />
    <rect x="1548.300" y="643.500" width="124" height="149" />
    <path d={'M1565.5 643v149M1641 643v149M1548 792.3h124' + issueRows.map(y => `M1548 ${y.toFixed(1)}h124`).join('')} stroke="#111" />
    <rect x="1548.300" y="797" width="124" height="197.500" />
    <path d="M1548 850.300h124M1548 889.700h124M1548 903.800h124M1548 918.500h124M1548 932.700h124M1548 947.300h124M1548 980.300h124" />
    <g fill="#161616" stroke="none">
      <text x="1554" y="300" fontSize="18" fontFamily={'"Open Sans","Noto Sans",sans-serif'} textLength="67" lengthAdjust="spacingAndGlyphs">Autodesk</text>
      <text x="1626" y="300" fontSize="18" fontFamily={'"Open Sans","Noto Sans",sans-serif'} textLength="35" lengthAdjust="spacingAndGlyphs">Revit</text>
      <text x="1621.500" y="290" fontSize="3">®</text>
      <text x="1661.300" y="290" fontSize="3">®</text>
      <text x="1586" y="345.500" fontSize="5" fontWeight="700" textLength="45" lengthAdjust="spacingAndGlyphs">www.autodesk.com/revit</text>
      {consultantY.map(y => (
        <g key={y} fontSize="5" fontWeight="700">
          {['Consultant', 'Address', 'Address', 'Phone', 'Fax', 'e-mail'].map((t, i) => (
            <text key={i} x="1558" y={y + 2 + [0, 5.3, 9.8, 14, 18.2, 23.7][i]} textLength={[20, 15, 15, 12, 7, 12][i]} lengthAdjust="spacingAndGlyphs">{t}</text>
          ))}
        </g>
      ))}
      <g fontSize="6.500" fontWeight="700">
        <text x="1549.500" y="650.500" textLength="10" lengthAdjust="spacingAndGlyphs">No.</text>
        <text x="1585.500" y="650.500" textLength="33" lengthAdjust="spacingAndGlyphs">Description</text>
        <text x="1648.500" y="650.500" textLength="13.500" lengthAdjust="spacingAndGlyphs">Date</text>
      </g>
      <g fontSize="17.500">
        <text x="1584.500" y="815" textLength="51" lengthAdjust="spacingAndGlyphs">Owner</text>
        <text x="1557" y="844.500" textLength="105" lengthAdjust="spacingAndGlyphs">Project Name</text>
        <text x="1570" y="877.500" textLength="79" lengthAdjust="spacingAndGlyphs">Floor Plan</text>
        <text x="1598.500" y="970.500" textLength="20" lengthAdjust="spacingAndGlyphs">A1</text>
      </g>
      {labelRows.map(([y, a, aw, b, bw]) => (
        <g key={a}>
          <text x="1552" y={y + 0.5} fontSize="4.500" fontWeight="700" textLength={aw} lengthAdjust="spacingAndGlyphs">{a}</text>
          <text x={1670 - bw} y={y + 2.8} fontSize="6.500" stroke="#161616" strokeWidth=".15" textLength={bw} lengthAdjust="spacingAndGlyphs">{b}</text>
        </g>
      ))}
      <text x="1552" y="988" fontSize="4.500" fontWeight="700" textLength="10" lengthAdjust="spacingAndGlyphs">Scale</text>
      <text x="1648.500" y="990" fontSize="6.500" textLength="21" lengthAdjust="spacingAndGlyphs">1 : 100</text>
      <text transform="translate(1682.500 998) rotate(-90)" fontSize="5" fontWeight="700" textLength="44" lengthAdjust="spacingAndGlyphs">09/03/2008 17:50:32</text>
    </g>

    {topBubbles.map(([x, t]) => (
      <g key={t}>
        <circle cx={x} cy="296.500" r="6.300" strokeWidth="1.200" strokeDasharray="5 .8" />
        <text x={x} y="299" fontSize="6" textAnchor="middle" fill="#111" stroke="none">{t}</text>
      </g>
    ))}
    <circle cx="1008" cy="294" r="6" strokeDasharray="4 .8" />
    <path d="M884.500 298a6.500 6.500 0 0 1 13 0" stroke="#1a3f94" />
    <path d="M887 293.500l4-3.500 4 3.500z" fill="#1d4fa8" stroke="#1a3f94" />

    <path d="M770 850v12.500h633V850M787 856h632" stroke="#111" />
    <path d="M770 855.500H1423M702 855.500h68" strokeDasharray="7 2 2 2" strokeWidth="1" />
    <path d="M771 862.500h80v2h78v-2h56v-.5h416" stroke="#0c0c0c" strokeWidth="2.400" />
    <path d="M776 850v12M849 850v14M877 850v13M933 850v13M985 850v13M1090 850v12M1147 850v12M1262 850v12M1318 850v12M1374 850v14h29v-14" stroke="#111" strokeWidth="1.800" />
    <path d={ticks.map(x => `M${x} 862v11`).join('')} stroke="#0c0c0c" strokeWidth="1.800" />
    <path d="M958.500 862v24" stroke="#0c0c0c" strokeWidth="1.500" />
    <path d="M958 886.500h9.500" stroke="#0c0c0c" strokeWidth="2.800" />
    <circle cx="696.500" cy="856" r="5.500" />
    {gridX.map(([x, t]) => (
      <g key={t}>
        <path d={`M${x} 864v23M${x} 890v3M${x} 896v13`} />
        <circle cx={x} cy="915.500" r="6.300" fill="#fff" strokeWidth="1.200" />
        <text x={x} y="918" fontSize="6" textAnchor="middle" fill="#111" stroke="none">{t}</text>
      </g>
    ))}
    <path d="M1073 918h18" stroke="#222" strokeWidth="1.400" strokeDasharray="3 .6" />
    <circle cx="1083.500" cy="932" r="5.800" />
    <path d="M1080 927.500l3.500-4 3.500 4z" fill="#111" />
    <text x="1083.500" y="935" fontSize="5" textAnchor="middle" fill="#111" stroke="none">1</text>
    <circle cx="671.500" cy="953" r="6" />
    <text x="671.500" y="956" fontSize="8.500" textAnchor="middle" fill="#111" stroke="none">1</text>
    <text x="680.500" y="950" fontSize="8.500" fill="#111" stroke="none" textLength="56.500" lengthAdjust="spacingAndGlyphs">01 - Entry Level</text>
    <text x="682" y="958.800" fontSize="5" fill="#111" stroke="none" textLength="17" lengthAdjust="spacingAndGlyphs">1 : 100</text>
    <path d="M678 952.800h761" stroke="#444" strokeWidth="1.400" />
  </Drawing>
);

const CheckMark = () => (
  <svg width="12" height="12" viewBox="0 0 12 12"><path d="M3 5.500l2.200 3.700L9 2.500" fill="none" stroke="#4b4a98" strokeWidth="2" /></svg>
);

const ink = { fill: 'none', stroke: '#47494c', strokeWidth: 1.4 } as const;

export default function App() {
  return (
    <Page>
      <Global />
      <TitleBar>
        <Slot $gap={5} $w={18}><svg width="18" height="22" viewBox="0 0 18 22"><path d="M2 2l8-1c6 0 7 8 2 11l5 9-5 1-4-8-1 7-5-2z" fill="#2f72ad" /><path d="M2 2l3 2v15l-3-1zM8 14l4 8 5-1-5-9z" fill="#1b4677" /><path d="M7 5h3c2 0 2 4 0 5H7z" fill="#d3d4d3" /></svg></Slot>
        <Slot $gap={11} $w={18}><svg width="18" height="15" viewBox="0 0 18 15" {...ink}><path d="M1 13V2h4l2 2h7v3M1 13l4-7h12l-4 7z" /><path d="M10 2c3-1 5 0 5 3" /></svg></Slot>
        <Slot $gap={10} $w={15}><svg width="15" height="16" viewBox="0 0 15 16"><path d="M0 0h13l2 2v14H0z" fill="#47494c" /><path d="M4 0h7v5H4zM3 9h9v6H3z" fill="#eceded" /></svg></Slot>
        <Slot $gap={9} $w={18}><svg width="18" height="18" viewBox="0 0 18 18" fill="#d9dada" stroke="#98999a" strokeWidth="1.200"><path d="M1 5l7-4 6 4v8l-6 4-7-4z" /><path d="M1 5l7 4 6-4M8 9v8" /><path d="M10 8h7v4l-3 3z" fill="#aaa" /></svg></Slot>
        <Slot $gap={6} $w={8}><Tri $s={3} /></Slot>
        <Slot $gap={8} $w={17}><svg width="17" height="14" viewBox="0 0 17 14" fill="#dedfdf" stroke="#98999a" strokeWidth="1.200"><path d="M1 6l6-5v3c6 0 9 2 9 9h-3c0-3-2-5-6-5v3z" /></svg></Slot>
        <Slot $gap={6} $w={8}><Tri $s={3} $c="#666" /></Slot>
        <Slot $gap={6} $w={17}><svg width="17" height="14" viewBox="0 0 17 14" fill="#dedfdf" stroke="#98999a" strokeWidth="1.200"><path d="M16 6l-6-5v3C4 4 1 6 1 13h3c0-3 2-5 6-5v3z" /></svg></Slot>
        <Slot $gap={6} $w={8}><Tri $s={3} $c="#666" /></Slot>
        <Slot $gap={7} $w={18}><svg width="18" height="17" viewBox="0 0 18 17" {...ink}><path d="M4 6V1h10v5" fill="#fff" /><path d="M1 6h16v7H1z" fill="#c9cacb" /><path d="M4 11h10l1 5H3z" fill="#fff" /></svg></Slot>
        <VSep $gap={8} />
        <Slot $gap={6} $w={17}><svg width="17" height="13" viewBox="0 0 17 13" {...ink}><path d="M1 1v5M16 1v5M3 3.500h11M5 1.500l-2 2 2 2M12 1.500l2 2-2 2" /><path d="M0 8h17v5H0z" fill="#e7a52c" stroke="#b3812a" strokeWidth="1" /></svg></Slot>
        <Slot $gap={7} $w={8}><Tri $s={3} /></Slot>
        <Slot $gap={7} $w={17}><svg width="17" height="17" viewBox="0 0 17 17" {...ink}><path d="M3 14L14 3M1 11l5 5M11 1l5 5" strokeWidth="1.200" /><path d="M2.500 14.500l1-4 3 3zM14.500 2.500l-1 4-3-3z" fill="#47494c" strokeWidth=".8" /></svg></Slot>
        <Slot $gap={9} $w={17}><svg width="17" height="16" viewBox="0 0 17 16" {...ink}><circle cx="10.500" cy="6" r="5" fill="#f0f0f0" /><path d="M5 7H2v6M10.500 3.500v5" /><path d="M0 12h4v3H0z" fill="#eee" strokeWidth="1" /></svg></Slot>
        <Slot $gap={8} $w={15}><svg width="14" height="16" viewBox="0 0 14 16"><path d="M1 15L6 1h2l5 14M3 10h8" fill="none" stroke="#3d3f42" strokeWidth="2.400" /></svg></Slot>
        <VSep $gap={9} />
        <Slot $gap={7} $w={18}><svg width="18" height="17" viewBox="0 0 18 17" {...ink}><path d="M1 7l6-6 9 4 1 3-1 7-7 1-6-3V7" fill="#e2e3e4" /><path d="M9 16V9l4-5M1 7l8 2M11 10h3v4" /></svg></Slot>
        <Slot $gap={6} $w={8}><Tri $s={3} /></Slot>
        <Slot $gap={8} $w={15}><svg width="15" height="16" viewBox="0 0 15 16"><path d="M5 1l9 7-9 7z" fill="#98999a" /><circle cx="6" cy="8" r="4.500" fill="#dcdddd" stroke="#8b8c8e" strokeWidth="1.200" /></svg></Slot>
        <Slot $gap={9} $w={18}><svg width="18" height="17" viewBox="0 0 18 17"><path d="M0 2h7M0 8h7M0 14h7" stroke="#3e4043" strokeWidth="3.500" /><path d="M11 2h7M11 8h7M11 14h7" stroke="#55575a" strokeWidth="1.500" /><path d="M12 0L6 17" stroke="#2c86d6" strokeWidth="1.500" /></svg></Slot>
        <VSep $gap={8} />
        <Slot $gap={8} $w={18}><svg width="18" height="17" viewBox="0 0 18 17" {...ink}><path d="M5 4V1h10v8M1 4h10v11H1zM1 7h10" /><path d="M10 10l6 6M16 10l-6 6" stroke="#d02a2a" strokeWidth="2.200" /></svg></Slot>
        <Slot $gap={7} $w={18}><svg width="18" height="17" viewBox="0 0 18 17" {...ink}><path d="M1 8V1h10v3M4 8h11v8H4z" fill="#ececec" /><path d="M4 10h11" strokeWidth="2" /><path d="M12 2h5v5M1 10v4h3" /></svg></Slot>
        <Slot $gap={4} $w={8}><Tri $s={3} /></Slot>
        <Slot $gap={7} $w={10}><svg width="8" height="9" viewBox="0 0 8 9"><path d="M0 1h8" stroke="#444" strokeWidth="1.600" /><path d="M0 4h8L4 8.500z" fill="#444" /></svg></Slot>
        <AppTitle $gap={288} $w={101}><Fit w={101}>Autodesk Revit 2018 -</Fit></AppTitle>
        <AppTitle $gap={17} $w={247}><Fit w={246.5}>RAC_RIV_03_Night_Render_m - Plano: A1 - Floor Plan</Fit></AppTitle>
        <Slot $gap={288} $w={6} $h={23}><Tri $d="right" $s={4} /></Slot>
        <SearchInput><Fit w={143.5}>Escriba palabra clave o frase</Fit></SearchInput>
        <Slot $gap={4} $w={18}><svg width="18" height="17" viewBox="0 0 18 17" {...ink}><path d="M2 6l2-5h3v5M16 6l-2-5h-3v5M1 8l1-2h5v10H1zM17 8l-1-2h-5v10h6zM7 7h4v3H7z" fill="#e3e4e4" /><path d="M1 11h6M11 11h6" /></svg></Slot>
        <Slot $gap={7} $w={16}><svg width="16" height="17" viewBox="0 0 16 17" {...ink}><path d="M3 3c0 6 4 9 10 8zM8 7l6-6M6 10l-4 6h11l-2-4" fill="#eee" /><path d="M12 1h3v3" /></svg></Slot>
        <Slot $gap={9} $w={17}><svg width="17" height="17" viewBox="0 0 17 17" {...ink}><path d="M8.500 1l2.200 5.300 5.600.4-4.300 3.600 1.400 5.600-4.900-3-4.900 3L5 10.300.7 6.700l5.600-.4z" fill="#f0f0f0" /></svg></Slot>
        <Slot $gap={9} $w={18}><svg width="18" height="17" viewBox="0 0 18 17"><path d="M5.500 4.500a3.500 4 0 0 1 7 0c0 3-1 4-1.500 5 0 2 6 1 6 6.500H1c0-5.500 6-4.500 6-6.500-.5-1-1.500-2-1.500-5z" fill="#6794dd" stroke="#33435c" strokeWidth="1.200" /></svg></Slot>
        <UserName><Fit w={44.5}>rparedese</Fit></UserName>
        <Slot $gap={44} $w={10}><Tri $s={3} /></Slot>
        <Slot $gap={9} $w={18}><svg width="17" height="15" viewBox="0 0 17 15"><path d="M1 1h4l3.500 4L12 1h4l-4 6.500 4 6.500h-4l-3.500-4L5 14H1l4-6.500z" fill="#8bacdf" stroke="#26396f" strokeWidth="1.300" /><path d="M11 2l4 5-4 6" stroke="#2c57b4" strokeWidth="2" fill="none" /></svg></Slot>
        <VSep $gap={8} />
        <Slot $gap={9} $w={19}><svg width="18" height="18" viewBox="0 0 18 18"><circle cx="9" cy="9" r="8" fill="#f4f5f6" stroke="#4b4d51" strokeWidth="1.400" /><path d="M6.500 7c0-4 5.500-3.500 5 0-.3 2-2.500 2-2.500 4M9 12.500v2" fill="none" stroke="#2669c9" strokeWidth="2" /></svg></Slot>
        <Slot $gap={5} $w={8}><Tri $s={3} /></Slot>
        <Slot $gap={28} $w={10}><svg width="10" height="14" viewBox="0 0 10 14"><path d="M0 11h9" stroke="#2f3032" strokeWidth="2.200" /></svg></Slot>
        <Slot $gap={14} $w={14}><svg width="14" height="13" viewBox="0 0 14 13" fill="none" stroke="#2f3032" strokeWidth="1.500"><path d="M4 4V1h9v6h-3M1 5h9v7H1z" /></svg></Slot>
        <Slot $gap={12} $w={14}><svg width="13" height="13" viewBox="0 0 13 13" stroke="#2f3032" strokeWidth="2"><path d="M1 1l11 11M12 1L1 12" /></svg></Slot>
      </TitleBar>
      <Tabs>
        <Tab $file><Fit w={36}>Archivo</Fit></Tab>
        <Tab $on><Fit w={57}>Arquitectura</Fit></Tab>
        {tabs.map(([t, w]) => <Tab key={t}><Fit w={w}>{t}</Fit></Tab>)}
        <TabExtra>
          <svg width="16" height="10" viewBox="0 0 16 10"><rect x=".6" y=".6" width="14.800" height="8.800" rx="2" fill="#e6e7e7" stroke="#4b4d50" /><path d="M5 6.500h6L8 3z" fill="#4b4d50" /></svg>
          <Tri $s={3} />
        </TabExtra>
      </Tabs>
      <Ribbon>
        <RPanel $w={80}>
          <RTools>
            <SelectedTool>
              <svg width="20" height="24" viewBox="0 0 20 24"><path d="M5 2v17l4-4 3 7 3-1-3-7h5z" fill="#eaf1f8" stroke="#9ab" strokeWidth="1.200" /></svg>
              <Fit w={44}>Modificar</Fit>
            </SelectedTool>
          </RTools>
          <RTitle $pad={7}><Fit w={52}>Seleccionar</Fit><Tri $s={4} $c="#2f2f31" /></RTitle>
        </RPanel>
        {panels.map((p, i) => (
          <RPanel key={p.title} $w={p.w} $last={i === panels.length - 1}>
            <RTools>
              {p.tools.map(t => (
                <Tool key={t.g} $gap={t.gap} $w={t.w} $drop={t.drop}>
                  <Glyph n={t.g} />
                  {t.t.map(([s, w]) => <Fit key={s} w={w}>{s}</Fit>)}
                  {t.under && <UnderArrow><Tri $s={3} $c="#7a7a7e" /></UnderArrow>}
                  {t.side && <SideArrow><Tri $s={3} $c="#7a7a7e" /></SideArrow>}
                </Tool>
              ))}
            </RTools>
            <RTitle $pad={p.pad}><Fit w={p.tw}>{p.title}</Fit>{p.arrow && <Tri $s={4} $c="#2f2f31" />}</RTitle>
          </RPanel>
        ))}
      </Ribbon>
      <OptionsBar />
      <Main>
        <Side>
          <PaneHead><Fit w={68}>Propiedades</Fit><svg width="10" height="9" viewBox="0 0 10 9" stroke="#1c1c1e" strokeWidth="2"><path d="M1 .5l8 8M9 .5l-8 8" /></svg></PaneHead>
          <PropsBody>
            <TypeRow>
              <Thumb><SheetIcon /></Thumb>
              <TypeText><Fit w={26}>Plano</Fit><Fit w={26}>Sheet</Fit></TypeText>
              <Tri $s={4} $c="#55555a" />
            </TypeRow>
            <SelectorRow>
              <Combo><Fit w={88}>Plano: Floor Plan</Fit><Tri $s={4} $c="#222" /></Combo>
              <EditType>
                <svg width="18" height="17" viewBox="0 0 18 17" fill="#f3f3f4" stroke="#54565a" strokeWidth="1.200"><path d="M1 3l2-2h5v5L6 8H1zM9 3l2-2h5v5l-2 2H9zM1 10l2-1h5v6H1z" /><path d="M10 6h7v10h-7z" fill="#cfe0f7" /><path d="M11 8h5" stroke="#3464c4" strokeWidth="2" /><path d="M12 11h4M12 13.500h4" /></svg>
                <Fit w={56.5}>Editar tipo</Fit>
              </EditType>
            </SelectorRow>
            <GridWrap>
              <PropGrid>
                <PropGroup><Fit w={44}>Gráficos</Fit><Chevrons /></PropGroup>
                {graphicProps.map(p => <PropLine key={p.k} p={p} />)}
                <PropGroup><Fit w={105}>Datos de identidad</Fit><Chevrons /></PropGroup>
                {idProps.map((p, i) => <PropLine key={i} p={p} />)}
              </PropGrid>
              <VScroll>
                <Tri $d="up" $s={3} />
                <VThumb $mt={9} $h={193}><i /><i /><i /></VThumb>
                <Spacer />
                <Tri $s={3} />
              </VScroll>
            </GridWrap>
            <PropsFoot>
              <HelpLink><Fit w={122}>Ayuda de propiedades</Fit></HelpLink>
              <ApplyButton><Fit w={37}>Aplicar</Fit></ApplyButton>
            </PropsFoot>
          </PropsBody>
          <BrowserHead><Fit w={205}>Navegador de proyectos - RAC_RIV_...</Fit><svg width="10" height="9" viewBox="0 0 10 9" stroke="#1c1c1e" strokeWidth="2"><path d="M1 .5l8 8M9 .5l-8 8" /></svg></BrowserHead>
          <TreeWrap>
            <Tree>
              <TreeRow><Box open /><Branch $w={5} /><NodeIcon><TableIcon /></NodeIcon><NodeText><Fit w={168}>Tablas de planificación/Cantida</Fit></NodeText></TreeRow>
              {schedules.map(([t, w], i) => (
                <TreeRow key={t} $child><ChildLine $half={i === schedules.length - 1} /><Branch $w={14} $ml={5} /><NodeText><Fit w={w}>{t}</Fit></NodeText></TreeRow>
              ))}
              <TreeRow><Box open /><Branch $w={5} /><NodeIcon><SheetIcon s={0.52} /></NodeIcon><NodeText><Fit w={57.5}>Planos (all)</Fit></NodeText></TreeRow>
              <TreeRow $child><ChildLine /><Box /><Branch $w={9} /><NodeText $active><Fit w={81.5}>A1 - Floor Plan</Fit></NodeText></TreeRow>
              <TreeRow $child><ChildLine $half /><Box /><Branch $w={9} /><NodeText><Fit w={69}>A2 - Sections</Fit></NodeText></TreeRow>
              <TreeRow><Box open /><Branch $w={5} /><NodeIcon><FamilyIcon /></NodeIcon><NodeText><Fit w={43}>Familias</Fit></NodeText></TreeRow>
              {families.map(([t, w]) => (
                <TreeRow key={t} $child><ChildLine /><Box /><Branch $w={9} /><NodeText><Fit w={w}>{t}</Fit></NodeText></TreeRow>
              ))}
            </Tree>
            <VScroll>
              <Tri $d="up" $s={3} />
              <VThumb $mt={74} $h={130}><i /><i /><i /></VThumb>
              <Spacer />
              <Tri $s={3} />
            </VScroll>
          </TreeWrap>
          <HScroll>
            <Tri $d="left" $s={3.5} />
            <HThumb $w={159} $ml={9}><i /><i /><i /></HThumb>
            <Slot $gap={27} $w={4} $h={14}><Tri $d="right" $s={3.5} /></Slot>
          </HScroll>
        </Side>
        <View>
          <ViewTop>
            <SheetArea>
              <Sheet />
              <Caption><Fit w={1276}>Clica en la pestaña “Propiedades DWF” y luego haz clic en el botón “Configurar impresión”.</Fit></Caption>
            </SheetArea>
            <VScroll>
              <Tri $d="up" $s={3} />
              <VThumb $mt={441} $h={16} />
              <Spacer />
              <Tri $s={3} />
            </VScroll>
          </ViewTop>
          <ViewBar>
            <svg width="17" height="12" viewBox="0 0 17 12" fill="none" stroke="#3d3f42" strokeWidth="1.200"><path d="M0 3l3 4c2-4 5-3 5 0s-5 4-5 1M8 7c1-4 6-4 6-1s-5 4-5 1M14 5c3 0 3-3 1-4" /></svg>
            <Slot $gap={10} $w={8} $h={14}><svg width="8" height="11" viewBox="0 0 8 11" fill="#e4f1ff" stroke="#2d7fe0" strokeWidth="1.300"><circle cx="4" cy="4" r="3.200" /><path d="M2.800 7v3h2.400V7" /></svg></Slot>
            <Slot $gap={14} $w={6} $h={14}><Tri $d="left" $s={3.5} $c="#2b2b2d" /></Slot>
            <HThumb $w={16} $ml={852} />
            <Slot $gap={850} $w={6} $h={14}><Tri $d="right" $s={3.5} $c="#2b2b2d" /></Slot>
          </ViewBar>
        </View>
      </Main>
      <Status>
        <Slot $gap={2} $w={22} $h={22}><Fit w={22}>Listo</Fit></Slot>
        <Slot $gap={965} $w={16} $h={20}><svg width="16" height="17" viewBox="0 0 16 17" fill="#bfc0c1" stroke="#7c7d7f" strokeWidth="1.100"><path d="M2 10l4-3v7l-4 2zM6 4h5M8 2v5M10 6v10h3V6zM4 5l4-4" /></svg></Slot>
        <StatusBox $gap={10} $w={217}><span /><Tri $s={3} $c="#a4a4a6" /></StatusBox>
        <Slot $gap={9} $w={16} $h={20}><svg width="16" height="16" viewBox="0 0 16 16" fill="#ddd" stroke="#8b8c8e" strokeWidth="1.200"><path d="M5 1h10l-1 5H8l-1 9H2l3-6z" /></svg></Slot>
        <Slot $gap={5} $w={8} $h={22}><Fit w={8}>:0</Fit></Slot>
        <Slot $gap={28} $w={17} $h={20}><svg width="17" height="17" viewBox="0 0 17 17"><rect width="17" height="17" rx="3" fill="#a1a2a3" /></svg></Slot>
        <Slot $gap={10} $w={17} $h={20}><svg width="17" height="17" viewBox="0 0 17 17"><path d="M4 0h13v17H0l4-6z" fill="#a1a2a3" /><path d="M5 7v8h3l3-3" stroke="#ddd" strokeWidth="1.500" fill="none" /></svg></Slot>
        <StatusBox $gap={8} $w={218}><Fit w={73}>Modelo base</Fit><Tri $s={3} $c="#a4a4a6" /></StatusBox>
        <Slot $gap={217} $w={17} $h={20}><svg width="17" height="16" viewBox="0 0 17 16" fill="#a5a6a8" stroke="#77787a" strokeWidth="1.200"><path d="M1 2h5l3 4 6-4v3l-5 4v6H8V9L5 8V5H1z" /></svg></Slot>
        <Slot $gap={11} $w={17} $h={20}><svg width="17" height="16" viewBox="0 0 17 16" fill="#909193" stroke="#77787a"><path d="M1 13l5-5 3-1V2l5 3v8z" /></svg></Slot>
        <Slot $gap={11} $w={17} $h={20}><svg width="17" height="16" viewBox="0 0 17 16" fill="#a5a6a8" stroke="#77787a"><path d="M4 1l9 5-2 2 4 6H2l4-4-3-3z" /></svg></Slot>
        <Slot $gap={11} $w={17} $h={20}><svg width="17" height="16" viewBox="0 0 17 16" fill="#a5a6a8" stroke="#77787a"><path d="M3 3l6 1 5-3v8l-4 1 4 4H3z" /></svg></Slot>
        <Slot $gap={11} $w={17} $h={20}><svg width="17" height="16" viewBox="0 0 17 16" fill="#eee" stroke="#77787a"><path d="M5 2v10l3-2 3 4 1-1-3-4h4zM1 4l2 1M9 1l-1 2" /></svg></Slot>
        <Slot $gap={10} $w={17} $h={20}><svg width="15" height="15" viewBox="0 0 15 15" fill="#c6c7c8" stroke="#77787a" strokeWidth="1.600"><circle cx="7.500" cy="7.500" r="5.500" strokeDasharray="3 1" /><circle cx="7.500" cy="7.500" r="3.500" strokeWidth="1" /></svg></Slot>
        <Slot $gap={8} $w={17} $h={20}><svg width="16" height="15" viewBox="0 0 16 15" fill="#eee" stroke="#4c4d50" strokeWidth="1.400"><path d="M1 2h13L9 8v5l-3-2V8z" /></svg></Slot>
        <Slot $gap={1} $w={8} $h={20}><Fit w={8}>:0</Fit></Slot>
      </Status>
      <Taskbar>{[57, 6, 62, 57, 64, 62, 62, 62, 62, 62].map((w, i) => <TaskChip key={i} $w={w} />)}</Taskbar>

      <Dialog>
        <DlgTitle>
          <Ghost width="460" height="30" viewBox="698 299 460 30">
            <path d="M777 309h335v17H777z" fill="#93afcf" opacity=".5" />
            <path d="M777 298v32M847 298v32M872 298v32M891 302v28M928 298v32M988 298v32M1050 298v32M1111 298v32" stroke="#5d7896" strokeWidth="3" opacity=".5" />
            <path d="M777 310h335M777 323h335" stroke="#7f9bbd" strokeWidth="2" opacity=".4" />
            <path d="M808 317h10M856 317h8M896 316h10M940 307h8M952 316h12M1018 316h8M1078 313h6v12h-6M1115 327h16" stroke="#5b7592" strokeWidth="5" opacity=".5" />
            <path d="M950 327h80l-8-8h-40z" fill="#566e8a" opacity=".6" />
          </Ghost>
          <Fit w={163}>Configuración de exportación DWF</Fit>
          <CapButtons>
            <HelpBtn><svg width="11" height="14" viewBox="0 0 11 14" fill="none"><path d="M2.500 5c0-4 6-4 6 0 0 2.500-3 2-3 4.500M5.500 11v2.500" stroke="#4a545f" strokeWidth="3.600" /><path d="M2.500 5c0-4 6-4 6 0 0 2.500-3 2-3 4.500M5.500 11.200v2" stroke="#fff" strokeWidth="1.800" /></svg></HelpBtn>
            <CloseBtn><svg width="13" height="11" viewBox="0 0 13 11"><path d="M2.500 1.500l8 8M10.500 1.500l-8 8" stroke="#50302f" strokeWidth="4" /><path d="M2.500 1.500l8 8M10.500 1.500l-8 8" stroke="#fff" strokeWidth="2.400" /></svg></CloseBtn>
          </CapButtons>
        </DlgTitle>
        <Client>
          <DlgTabs>
            <DlgTab $w={78}><Fit w={67}>Vistas/Planos</Fit></DlgTab>
            <DlgTab $w={107} $on><Fit w={90.5}>Propiedades DWF</Fit></DlgTab>
            <DlgTab $w={135}><Fit w={125.5}>Información de proyecto</Fit></DlgTab>
          </DlgTabs>
          <TabPage>
            <Line $h={20} $pt={1}><Fit w={133}>Exportar datos de objeto:</Fit></Line>
            <Line $h={29}><CheckBox><CheckMark /></CheckBox><Fit w={131}>Propiedades del elemento</Fit></Line>
            <Line $h={20} $ml={21}><CheckBox /><Fit w={310}>Habitaciones, espacios y áreas en capa de contornos aparte</Fit></Line>
            <Line $h={29}><CheckBox><CheckMark /></CheckBox><Fit w={310}>Conf. de textura para apariencias de renderiz. de materiales</Fit></Line>
            <Rule $mt={3} />
            <Line $h={37} $pt={1}><Fit w={134}>Configuración de gráficos:</Fit></Line>
            <Line $h={15}><Radio $on /><Fit w={115.5}>Usar formato estándar</Fit></Line>
            <Line $h={40}><Radio /><Fit w={161}>Usar formato ráster comprimido</Fit></Line>
            <Line $h={21} $ml={22} $dim><Fit w={96}>Calidad de imagen:</Fit><QualityCombo><Fit w={22}>Baja</Fit><Tri $s={3.5} $c="#8e8e92" /></QualityCombo></Line>
            <Rule $mt={8} />
            <Line $h={38} $pt={3}><Fit w={198}>Nombre de configuración de impresión:</Fit><Slot $gap={17} $w={38} $h={18}><Fit w={37.5}>Default</Fit></Slot></Line>
            <PrintButton><Fit w={117.5}>Configurar impresión...</Fit></PrintButton>
          </TabPage>
          <DlgFoot>
            <DlgButton $w={94}><Fit w={59}>Siguiente...</Fit></DlgButton>
            <DlgButton $w={134} $gap={9}><Fit w={84.5}>Guardar y cerrar</Fit></DlgButton>
            <DlgButton $w={94} $gap={8}><Fit w={44}>Cancelar</Fit></DlgButton>
            <Grip width="9" height="9" viewBox="0 0 9 9" fill="#b4b4b8"><path d="M7 0h2v2H7zM4 3h2v2H4zM7 3h2v2H7zM1 6h2v2H1zM4 6h2v2H4zM7 6h2v2H7z" /></Grip>
          </DlgFoot>
        </Client>
      </Dialog>
    </Page>
  );
}
